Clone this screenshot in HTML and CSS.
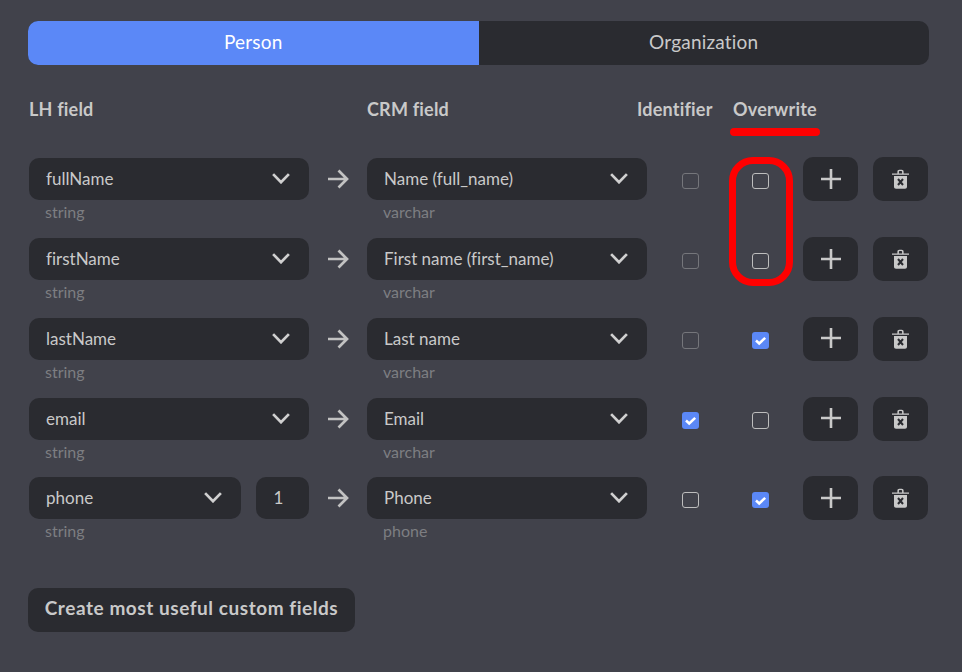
FILE: index.html
```html
<!DOCTYPE html>
<html lang="en">
<head>
    <meta charset="UTF-8">
    <meta name="viewport" content="width=device-width, initial-scale=1.0">
    <title>Field mapping</title>
    <link rel="stylesheet" href="styles.css">
</head>
<body>
    <svg class="sprite" width="0" height="0">
        <symbol id="chevron" viewBox="0 0 18 11"><path d="M1.100 1.100 9 9.200l7.900-8.100" fill="none" stroke="currentColor" stroke-width="2.700"/></symbol>
        <symbol id="arrow" viewBox="0 0 22 20"><path d="M1 10h19M11.500 1.500 20 10l-8.500 8.500" fill="none" stroke="currentColor" stroke-width="2.700"/></symbol>
        <symbol id="plus" viewBox="0 0 20 20"><path d="M10 0v20M0 10h20" fill="none" stroke="currentColor" stroke-width="2.600"/></symbol>
        <symbol id="trash" viewBox="0 0 17 20"><path d="M0 4.400h17v1.400H0zM5.400 4.400V2.600C5.400 1.400 6.200.7 7.300.7h2.400c1.100 0 1.900.7 1.900 1.900v1.800h-1.500V2.900c0-.5-.3-.8-.8-.8H7.700c-.5 0-.8.3-.8.8v1.500z" fill="currentColor"/><path d="M2 7h13v10.800c0 1.200-.8 2-2 2H4c-1.200 0-2-.8-2-2z" fill="currentColor"/><path d="m6 10 5 6m0-6-5 6" fill="none" stroke="#2a2b30" stroke-width="2"/></symbol>
        <symbol id="tick" viewBox="0 0 17 17"><path d="m4 8.500 3.200 3 6-5.700" fill="none" stroke="#fff" stroke-width="2.500"/></symbol>
    </svg>

    <main class="page">
        <div class="tabs">
            <div class="tab active">Person</div>
            <div class="tab">Organization</div>
        </div>

        <div class="heads">
            <div class="head-lh">LH field</div>
            <div class="head-crm">CRM field</div>
            <div class="head-id">Identifier</div>
            <div>Overwrite</div>
        </div>

        <div class="row">
            <div class="field">
                <div class="select"><span>fullName</span><svg class="chevron"><use href="#chevron"/></svg></div>
                <div class="type">string</div>
            </div>
            <svg class="arrow"><use href="#arrow"/></svg>
            <div class="field">
                <div class="select"><span>Name (full_name)</span><svg class="chevron"><use href="#chevron"/></svg></div>
                <div class="type">varchar</div>
            </div>
            <div class="cell-id"><span class="check dim"></span></div>
            <div class="cell-over"><span class="check"></span></div>
            <div class="icon-btn"><svg class="plus"><use href="#plus"/></svg></div>
            <div class="icon-btn"><svg class="trash"><use href="#trash"/></svg></div>
        </div>

        <div class="row">
            <div class="field">
                <div class="select"><span>firstName</span><svg class="chevron"><use href="#chevron"/></svg></div>
                <div class="type">string</div>
            </div>
            <svg class="arrow"><use href="#arrow"/></svg>
            <div class="field">
                <div class="select"><span>First name (first_name)</span><svg class="chevron"><use href="#chevron"/></svg></div>
                <div class="type">varchar</div>
            </div>
            <div class="cell-id"><span class="check dim"></span></div>
            <div class="cell-over"><span class="check"></span></div>
            <div class="icon-btn"><svg class="plus"><use href="#plus"/></svg></div>
            <div class="icon-btn"><svg class="trash"><use href="#trash"/></svg></div>
        </div>

        <div class="row">
            <div class="field">
                <div class="select"><span>lastName</span><svg class="chevron"><use href="#chevron"/></svg></div>
                <div class="type">string</div>
            </div>
            <svg class="arrow"><use href="#arrow"/></svg>
            <div class="field">
                <div class="select"><span>Last name</span><svg class="chevron"><use href="#chevron"/></svg></div>
                <div class="type">varchar</div>
            </div>
            <div class="cell-id"><span class="check dim"></span></div>
            <div class="cell-over"><span class="check on"><svg><use href="#tick"/></svg></span></div>
            <div class="icon-btn"><svg class="plus"><use href="#plus"/></svg></div>
            <div class="icon-btn"><svg class="trash"><use href="#trash"/></svg></div>
        </div>

        <div class="row">
            <div class="field">
                <div class="select"><span>email</span><svg class="chevron"><use href="#chevron"/></svg></div>
                <div class="type">string</div>
            </div>
            <svg class="arrow"><use href="#arrow"/></svg>
            <div class="field">
                <div class="select"><span>Email</span><svg class="chevron"><use href="#chevron"/></svg></div>
                <div class="type">varchar</div>
            </div>
            <div class="cell-id"><span class="check on"><svg><use href="#tick"/></svg></span></div>
            <div class="cell-over"><span class="check"></span></div>
            <div class="icon-btn"><svg class="plus"><use href="#plus"/></svg></div>
            <div class="icon-btn"><svg class="trash"><use href="#trash"/></svg></div>
        </div>

        <div class="row">
            <div class="field">
                <div class="field-pair">
                    <div class="select"><span>phone</span><svg class="chevron"><use href="#chevron"/></svg></div>
                    <div class="index">1</div>
                </div>
                <div class="type">string</div>
            </div>
            <svg class="arrow"><use href="#arrow"/></svg>
            <div class="field">
                <div class="select"><span>Phone</span><svg class="chevron"><use href="#chevron"/></svg></div>
                <div class="type">phone</div>
            </div>
            <div class="cell-id"><span class="check"></span></div>
            <div class="cell-over"><span class="check on"><svg><use href="#tick"/></svg></span></div>
            <div class="icon-btn"><svg class="plus"><use href="#plus"/></svg></div>
            <div class="icon-btn"><svg class="trash"><use href="#trash"/></svg></div>
        </div>

        <button class="create" type="button">Create most useful custom fields</button>

        <!-- red annotations drawn on top of the screenshot -->
        <div class="mark-line"></div>
        <div class="mark-box"></div>
    </main>
</body>
</html>
```

FILE: styles.css
```css
body {
    font-family: Lato, "Open Sans", sans-serif;
    font-variant-ligatures: none;
    margin: 0;
    padding: 0;
    background-color: #41424b;
    color: #c9c9c9;
}

.sprite {
    position: absolute;
}

.page {
    position: relative;
    width: 901px;
    height: 651px;
    padding: 21px 33px 0 28px;
}

.tabs {
    display: flex;
    height: 44px;
    border-radius: 10px;
    overflow: hidden;
    background-color: #2a2b30;
}

.tab {
    flex: 1;
    display: flex;
    align-items: center;
    justify-content: center;
    padding-bottom: 3px;
    font-size: 19px;
    letter-spacing: 0.2px;
}

.tab.active {
    background-color: #5b88f7;
    color: white;
}

.heads {
    display: flex;
    height: 26px;
    line-height: 26px;
    margin: 31px 0 35.4px 1px;
    font-size: 18px;
    font-weight: 700;
    letter-spacing: 0.2px;
}

.head-lh {
    width: 338px;
}

.head-crm {
    width: 270px;
}

.head-id {
    width: 96px;
}

.row {
    display: flex;
    align-items: flex-start;
    height: 79.75px;
    padding-left: 1px;
}

.field {
    width: 280px;
    padding-top: 1px;
}

.field-pair {
    display: flex;
    gap: 15px;
}

.select {
    display: flex;
    flex: 1;
    align-items: center;
    justify-content: space-between;
    height: 41px;
    padding: 0 19px 1px 17px;
    border-radius: 10px;
    background-color: #2a2b30;
    font-size: 17px;
}

.index {
    display: flex;
    align-items: center;
    justify-content: center;
    width: 45px;
    height: 41px;
    padding: 0 8px 1px 0;
    border-radius: 10px;
    background-color: #2a2b30;
    font-size: 17px;
}

.type {
    margin: 2px 0 0 16px;
    height: 20px;
    line-height: 20px;
    font-size: 16px;
    color: #7d7e82;
}

.chevron {
    width: 18px;
    height: 11px;
    color: #d0d0d0;
}

.arrow {
    flex: none;
    width: 22px;
    height: 20px;
    margin: 12px 18px 0;
    color: #c2c2c2;
}

.cell-id {
    display: flex;
    justify-content: center;
    width: 87px;
    padding-top: 15.6px;
}

.cell-over {
    display: flex;
    justify-content: center;
    width: 53px;
    margin-right: 16px;
    padding-top: 15.6px;
}

.check {
    display: block;
    box-sizing: border-box;
    width: 17px;
    height: 16.5px;
    border: 1.5px solid #bdbdbd;
    border-radius: 3px;
}

.check.dim {
    border-color: #75767b;
}

.check.on {
    border: none;
    background-color: #5b88f7;
}

.check svg {
    display: block;
    width: 17px;
    height: 17px;
}

.icon-btn {
    display: flex;
    align-items: center;
    justify-content: center;
    flex: none;
    width: 55px;
    height: 44px;
    border-radius: 10px;
    background-color: #2a2b30;
    color: #c9c9c9;
}

.icon-btn + .icon-btn {
    margin-left: 15px;
}

.plus {
    width: 20px;
    height: 20px;
    margin-bottom: 1px;
}

.trash {
    width: 17px;
    height: 20px;
}

.create {
    display: block;
    width: 327px;
    height: 44px;
    margin-top: 32px;
    padding: 0 0 5px;
    border: none;
    border-radius: 10px;
    background-color: #2a2b30;
    color: #c9c9c9;
    font-family: inherit;
    font-size: 19px;
    font-weight: 700;
    letter-spacing: 0.55px;
}

.mark-line {
    position: absolute;
    left: 730px;
    top: 128px;
    width: 90px;
    height: 8px;
    border-radius: 4px;
    background-color: #ff0000;
}

.mark-box {
    position: absolute;
    left: 729px;
    top: 157px;
    width: 64px;
    height: 129px;
    box-sizing: border-box;
    border: 7px solid #ff0000;
    border-radius: 24px;
}
```
